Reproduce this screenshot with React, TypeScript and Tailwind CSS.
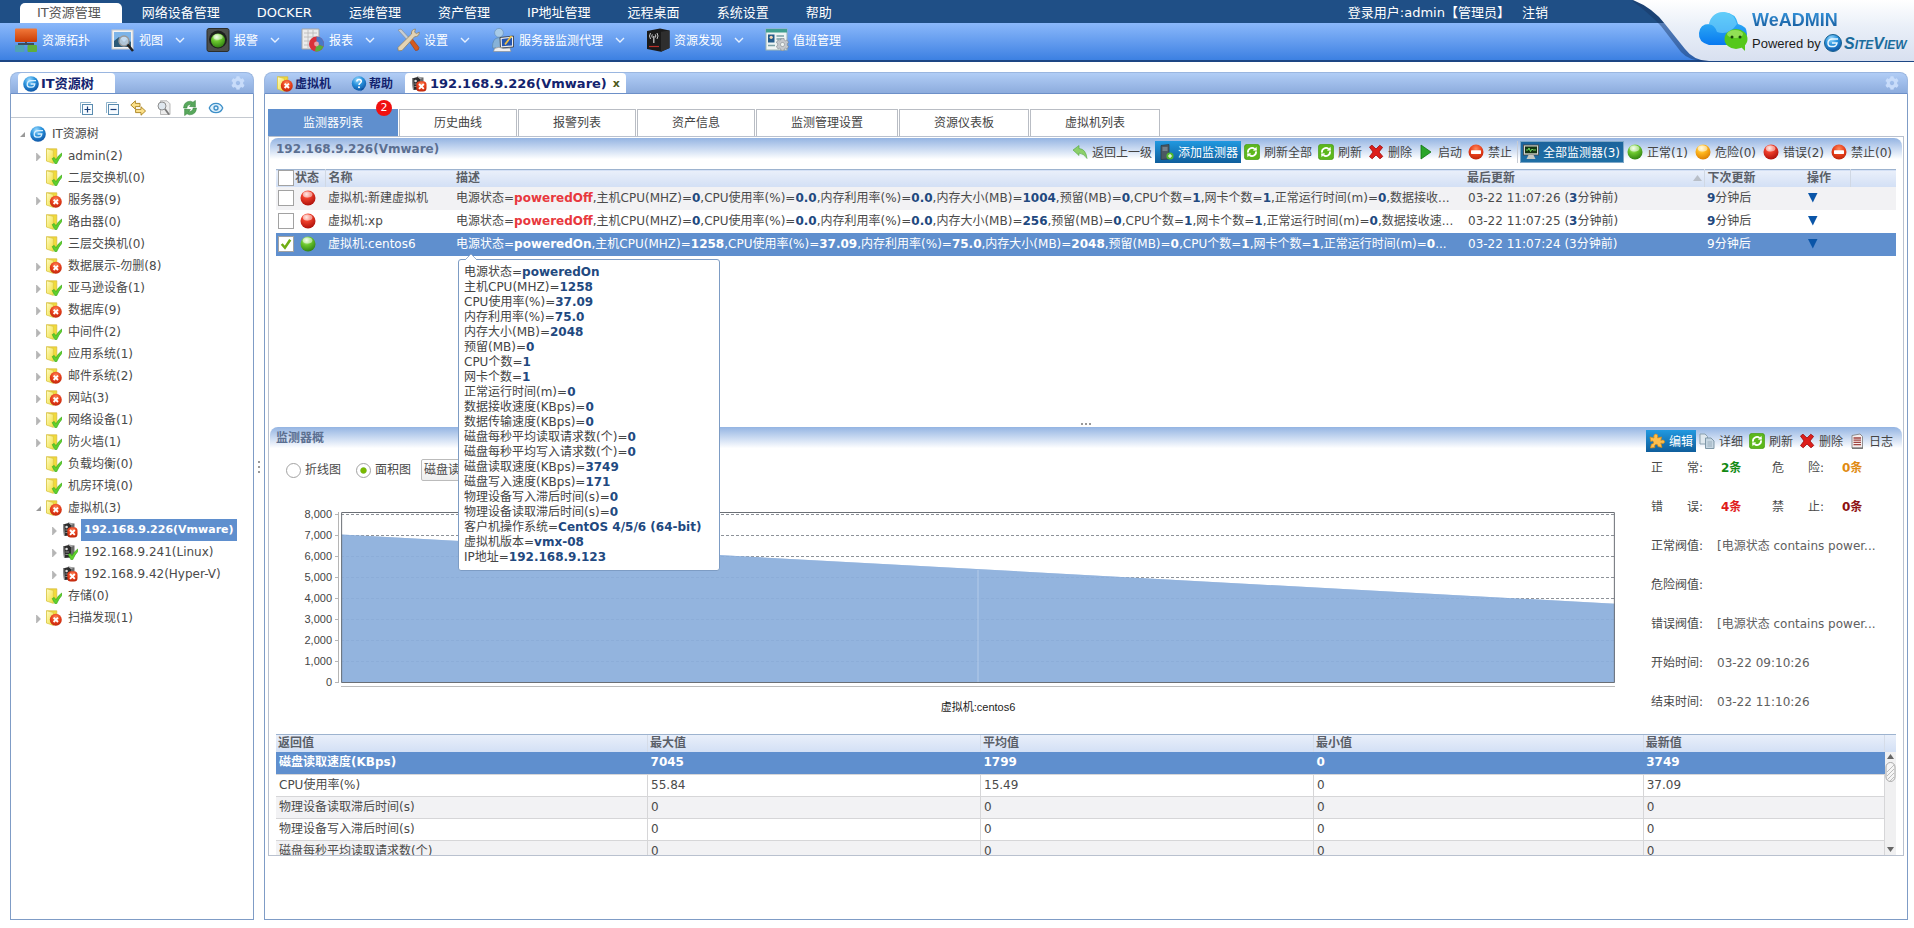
import { useState, type ReactNode } from 'react'
import { FaCog } from 'react-icons/fa'
import { Eye } from 'lucide-react'

type Status = 'ok' | 'error'

interface TreeNode {
    name: string
    status: Status
    level: 1 | 2
    arrow?: 'open' | 'closed'
    selected?: boolean
}

interface Monitor {
    name: string
    status: Status
    updated: string
    values: [string, string][]
    more: string
}

const menus = ['IT资源管理', '网络设备管理', 'DOCKER', '运维管理', '资产管理', 'IP地址管理', '远程桌面', '系统设置', '帮助']

const treeNodes: TreeNode[] = [
    { name: 'admin(2)', status: 'ok', level: 1, arrow: 'closed' },
    { name: '二层交换机(0)', status: 'ok', level: 1 },
    { name: '服务器(9)', status: 'error', level: 1, arrow: 'closed' },
    { name: '路由器(0)', status: 'ok', level: 1 },
    { name: '三层交换机(0)', status: 'ok', level: 1 },
    { name: '数据展示-勿删(8)', status: 'error', level: 1, arrow: 'closed' },
    { name: '亚马逊设备(1)', status: 'ok', level: 1, arrow: 'closed' },
    { name: '数据库(9)', status: 'error', level: 1, arrow: 'closed' },
    { name: '中间件(2)', status: 'ok', level: 1, arrow: 'closed' },
    { name: '应用系统(1)', status: 'ok', level: 1, arrow: 'closed' },
    { name: '邮件系统(2)', status: 'error', level: 1, arrow: 'closed' },
    { name: '网站(3)', status: 'error', level: 1, arrow: 'closed' },
    { name: '网络设备(1)', status: 'ok', level: 1, arrow: 'closed' },
    { name: '防火墙(1)', status: 'ok', level: 1, arrow: 'closed' },
    { name: '负载均衡(0)', status: 'ok', level: 1 },
    { name: '机房环境(0)', status: 'ok', level: 1 },
    { name: '虚拟机(3)', status: 'error', level: 1, arrow: 'open' },
    { name: '192.168.9.226(Vmware)', status: 'error', level: 2, arrow: 'closed', selected: true },
    { name: '192.168.9.241(Linux)', status: 'ok', level: 2, arrow: 'closed' },
    { name: '192.168.9.42(Hyper-V)', status: 'error', level: 2, arrow: 'closed' },
    { name: '存储(0)', status: 'ok', level: 1 },
    { name: '扫描发现(1)', status: 'error', level: 1, arrow: 'closed' },
]

const pageTabs = ['监测器列表', '历史曲线', '报警列表', '资产信息', '监测管理设置', '资源仪表板', '虚拟机列表']

// the list shows the first nine values, the tooltip shows all of them
const LIST_VALUES = 9

const offValues = (memory: string): [string, string][] => [
    ['电源状态', 'poweredOff'],
    ['主机CPU(MHZ)', '0'],
    ['CPU使用率(%)', '0.0'],
    ['内存利用率(%)', '0.0'],
    ['内存大小(MB)', memory],
    ['预留(MB)', '0'],
    ['CPU个数', '1'],
    ['网卡个数', '1'],
    ['正常运行时间(m)', '0'],
]

const monitors: Monitor[] = [
    { name: '虚拟机:新建虚拟机', status: 'error', updated: '03-22 11:07:26', values: offValues('1004'), more: ',数据接收...' },
    { name: '虚拟机:xp', status: 'error', updated: '03-22 11:07:25', values: offValues('256'), more: ',数据接收速...' },
    {
        name: '虚拟机:centos6',
        status: 'ok',
        updated: '03-22 11:07:24',
        more: '...',
        values: [
            ['电源状态', 'poweredOn'],
            ['主机CPU(MHZ)', '1258'],
            ['CPU使用率(%)', '37.09'],
            ['内存利用率(%)', '75.0'],
            ['内存大小(MB)', '2048'],
            ['预留(MB)', '0'],
            ['CPU个数', '1'],
            ['网卡个数', '1'],
            ['正常运行时间(m)', '0'],
            ['数据接收速度(KBps)', '0'],
            ['数据传输速度(KBps)', '0'],
            ['磁盘每秒平均读取请求数(个)', '0'],
            ['磁盘每秒平均写入请求数(个)', '0'],
            ['磁盘读取速度(KBps)', '3749'],
            ['磁盘写入速度(KBps)', '171'],
            ['物理设备写入滞后时间(s)', '0'],
            ['物理设备读取滞后时间(s)', '0'],
            ['客户机操作系统', 'CentOS 4/5/6 (64-bit)'],
            ['虚拟机版本', 'vmx-08'],
            ['IP地址', '192.168.9.123'],
        ],
    },
]

const summaryRows = [
    ['磁盘读取速度(KBps)', '7045', '1799', '0', '3749'],
    ['CPU使用率(%)', '55.84', '15.49', '0', '37.09'],
    ['物理设备读取滞后时间(s)', '0', '0', '0', '0'],
    ['物理设备写入滞后时间(s)', '0', '0', '0', '0'],
    ['磁盘每秒平均读取请求数(个)', '0', '0', '0', '0'],
]

const yLabels = ['8,000', '7,000', '6,000', '5,000', '4,000', '3,000', '2,000', '1,000', '0']

/* ---------- icons ---------- */

function IconDefs() {
    return (
        <svg width="0" height="0" className="absolute" aria-hidden="true">
            <defs>
                <radialGradient id="ballRed" cx="0.4" cy="0.25" r="0.8">
                    <stop offset="0" stopColor="#ffd0c8" />
                    <stop offset="0.35" stopColor="#f0402c" />
                    <stop offset="1" stopColor="#a80d08" />
                </radialGradient>
                <radialGradient id="ballGreen" cx="0.4" cy="0.25" r="0.8">
                    <stop offset="0" stopColor="#e8ffd8" />
                    <stop offset="0.4" stopColor="#6cc82e" />
                    <stop offset="1" stopColor="#2c7d10" />
                </radialGradient>
                <radialGradient id="ballOrange" cx="0.4" cy="0.25" r="0.8">
                    <stop offset="0" stopColor="#fff6c0" />
                    <stop offset="0.4" stopColor="#ffb81e" />
                    <stop offset="1" stopColor="#d97a00" />
                </radialGradient>
                <radialGradient id="ballBlue" cx="0.4" cy="0.25" r="0.8">
                    <stop offset="0" stopColor="#9fdcff" />
                    <stop offset="0.45" stopColor="#2a93dd" />
                    <stop offset="1" stopColor="#0b4fa0" />
                </radialGradient>
                <radialGradient id="crossRed" cx="0.5" cy="0.3" r="0.75">
                    <stop offset="0" stopColor="#ff8a5c" />
                    <stop offset="0.5" stopColor="#e8401c" />
                    <stop offset="1" stopColor="#b82208" />
                </radialGradient>
                <linearGradient id="folder" x1="0" y1="0" x2="1" y2="1">
                    <stop offset="0" stopColor="#fffcc8" />
                    <stop offset="1" stopColor="#f0de3a" />
                </linearGradient>
                <linearGradient id="cloud" x1="0" y1="0" x2="0" y2="1">
                    <stop offset="0" stopColor="#3fc0f7" />
                    <stop offset="1" stopColor="#0879f0" />
                </linearGradient>
                <linearGradient id="logoBack" x1="0" y1="0" x2="0" y2="1">
                    <stop offset="0" stopColor="#ffffff" />
                    <stop offset="0.45" stopColor="#e9eff8" />
                    <stop offset="1" stopColor="#d8e0f0" />
                </linearGradient>
                <linearGradient id="orangeBox" x1="0" y1="0" x2="0" y2="1">
                    <stop offset="0" stopColor="#f2793a" />
                    <stop offset="1" stopColor="#c93c06" />
                </linearGradient>
            </defs>
        </svg>
    )
}

function Svg({ size = 16, children }: { size?: number; children: ReactNode }) {
    return (
        <svg width={size} height={size} viewBox={`0 0 ${size} ${size}`} className="shrink-0" aria-hidden="true">
            {children}
        </svg>
    )
}

const CheckMark = () => <path d="M6.2 10.6 L8.2 9.4 L10 11.8 Q12 7.5 15.8 5 L16 7.2 Q12.6 11 10.6 15.8 H9Z" fill="#5fd02c" stroke="#35a515" strokeWidth="0.6" />

const CrossBall = () => (
    <>
        <circle cx="9.8" cy="9.8" r="6" fill="url(#crossRed)" />
        <path d="M7.6 7.6 L12 12 M12 7.6 L7.6 12" stroke="#fff" strokeWidth="1.9" />
    </>
)

function FolderIcon({ status }: { status: Status }) {
    return (
        <Svg>
            <path d="M0.5 0.8 H10.8 V12.8 H0.5Z" fill="#f1da3a" stroke="#d6b83a" strokeWidth="0.7" />
            <path d="M0.5 0.8 L7.4 2.4 V15.4 L0.5 13Z" fill="url(#folder)" stroke="#d8c646" strokeWidth="0.7" />
            {status === 'ok' ? <CheckMark /> : <CrossBall />}
        </Svg>
    )
}

function HostIcon({ status }: { status: Status }) {
    return (
        <Svg>
            <path d="M6 0.5 L12.5 1.5 V12 L8 14 L6 12Z" fill="#6a6a6a" />
            <path d="M1 2.5 L6.5 1 L9 3 V13.5 L2 14Z" fill="#2c2c2c" />
            <path d="M6.5 1 L12.5 1.5 L9 3Z" fill="#b5b5b5" />
            <path d="M1 2.5 L2.2 2.2 L3 14 H2Z" fill="#8f8f8f" />
            <circle cx="4.6" cy="5" r="1.3" fill="#ddd" />
            <path d="M3.4 8 H7 M3.4 10.5 H7" stroke="#aaa" strokeWidth="0.8" />
            {status === 'ok' ? (
                <CheckMark />
            ) : (
                <>
                    <rect x="5.3" y="5.3" width="10.2" height="10.2" rx="3.5" fill="url(#crossRed)" />
                    <path d="M8 8 L12.8 12.8 M12.8 8 L8 12.8" stroke="#fff" strokeWidth="1.9" />
                </>
            )}
        </Svg>
    )
}

const GlobeIcon = () => (
    <Svg>
        <circle cx="8" cy="8" r="7.8" fill="url(#ballBlue)" />
        <path d="M13 4.6 H8 Q4.6 4.8 4.2 8 Q4 11 6.6 11.2 H9 Q11.4 11 11.8 8 H7.6" fill="none" stroke="#d8f0ff" strokeWidth="1.3" />
    </Svg>
)

const HelpIcon = () => (
    <Svg>
        <circle cx="8" cy="7.5" r="7.2" fill="url(#ballBlue)" />
        <path d="M5.8 5.5 Q6 3.3 8.2 3.4 Q10.4 3.6 10.3 5.5 Q10.2 6.6 8.9 7.3 Q8 7.9 8 9" fill="none" stroke="#fff" strokeWidth="1.5" />
        <circle cx="8" cy="11.2" r="1" fill="#fff" />
        <path d="M9 15.5 L13 13 L11 12Z" fill="#0b4fa0" />
    </Svg>
)

const Ball = ({ fill }: { fill: string }) => (
    <Svg>
        <circle cx="8" cy="8" r="7.5" fill={fill} />
        <ellipse cx="7.6" cy="4.6" rx="4.8" ry="3" fill="#fff" opacity="0.5" />
    </Svg>
)

const StopIcon = () => (
    <Svg>
        <circle cx="8" cy="8" r="7.5" fill="url(#crossRed)" />
        <rect x="3" y="6.3" width="10" height="3.6" rx="0.6" fill="#fff" />
    </Svg>
)

const RefreshIcon = () => (
    <Svg>
        <rect x="0.3" y="0.3" width="15.4" height="15.4" rx="3" fill="#5cb71c" stroke="#3f9410" strokeWidth="0.6" />
        <path d="M4 8.6 A4 4 0 0 1 10.6 5 M12 7.4 A4 4 0 0 1 5.4 11" fill="none" stroke="#fff" strokeWidth="1.8" />
        <path d="M9 6.8 L13 6.6 L12.4 2.8Z M7 9.2 L3 9.4 L3.6 13.2Z" fill="#fff" />
    </Svg>
)

const DeleteIcon = () => (
    <Svg>
        <path d="M1.5 3 L4 1.2 L8 5 L11.8 1.2 L14.6 3.4 L11 8 L14.8 12.4 L12 14.8 L8 11 L4.2 14.8 L1.5 12.6 L5 8Z" fill="#dd1f1c" stroke="#9d0a0a" strokeWidth="0.8" />
    </Svg>
)

const BackIcon = () => (
    <Svg>
        <path d="M1 6 L7 1.5 V4.5 Q14 5 15 14.5 Q12 9.5 7 9 V11.5Z" fill="#8ccf6a" stroke="#4fa53a" strokeWidth="0.6" />
    </Svg>
)

const PlayIcon = () => (
    <Svg>
        <path d="M3 1 L13 8 L3 15Z" fill="#2aa52a" stroke="#107510" strokeWidth="0.8" />
    </Svg>
)

const AddHostIcon = () => (
    <Svg>
        <path d="M3 1.5 L11 0.5 V15 L3 15.5Z" fill="#4b5862" stroke="#2d3942" strokeWidth="0.7" />
        <path d="M4.5 4 H9.5 M4.5 6 H9.5" stroke="#a5b2bb" strokeWidth="0.9" />
        <circle cx="12" cy="12" r="3.6" fill="#52b82c" />
        <path d="M12 10 V14 M10 12 H14" stroke="#fff" strokeWidth="1.1" />
    </Svg>
)

const MonitorIcon = () => (
    <Svg>
        <rect x="0.5" y="1" width="15" height="10" fill="#d4d7d0" stroke="#444" strokeWidth="0.8" />
        <rect x="2" y="2.5" width="12" height="6.8" fill="#123312" />
        <path d="M3 6 H5 L6 4 L7.5 7.5 L9 5 L10 6 H13" fill="none" stroke="#7fe66a" strokeWidth="0.9" />
        <path d="M5.5 11 H10.5 L12.5 15 H3.5Z" fill="#c3c6c0" />
    </Svg>
)

const PuzzleIcon = () => (
    <Svg>
        <path d="M1 4 L5 5 Q4 1.5 6.8 1 Q9.5 1 8.6 5 L12.5 4 L11.8 7.4 Q15.8 6.4 15.6 9 Q15 11.5 11.8 10 L13 14.5 L9 13.6 Q9 11 7 11.2 Q5 11.8 5.8 14.6 L1.4 15 L2.4 11 Q5 11 4.6 9 Q4 7.4 1.8 8.4Z" fill="#ffbf4d" stroke="#d98a14" strokeWidth="0.7" />
    </Svg>
)

const CopyIcon = () => (
    <Svg>
        <path d="M1 1 H6 L8.5 3.5 V11 H1Z" fill="#dfe8ee" stroke="#8ba0ae" />
        <path d="M6.5 5 H12 L15 8 V15.5 H6.5Z" fill="#c6d6e2" stroke="#7f97a7" />
        <path d="M8.5 9 H13 M8.5 11 H13 M8.5 13 H13" stroke="#8fa5b4" strokeWidth="0.8" />
    </Svg>
)

const LogIcon = () => (
    <Svg>
        <path d="M3 2.5 L11 1 L13.5 3.5 V15 H3Z" fill="#f4eeee" stroke="#777" strokeWidth="0.8" />
        <path d="M4.5 5 H12 M4.5 7.2 H12 M4.5 9.4 H12 M4.5 11.6 H12" stroke="#a04440" strokeWidth="1.3" />
        <path d="M3 15.2 H14" stroke="#555" />
    </Svg>
)

/* top tool bar, 24px */

const TopologyIcon = () => (
    <Svg size={24}>
        <path d="M12 13 V17 M5 19 V16 H19 V19" fill="none" stroke="#3f4d5c" strokeWidth="2" />
        <rect x="1" y="0.5" width="22" height="13.5" rx="1" fill="url(#orangeBox)" />
        <rect x="1" y="17" width="9.5" height="7" rx="1" fill="#4fa3b5" />
        <rect x="13.5" y="17" width="9.5" height="7" rx="1" fill="#5fae3c" />
    </Svg>
)

const ViewIcon = () => (
    <Svg size={24}>
        <rect x="1" y="2" width="21" height="19" fill="#f3f3f3" stroke="#c9c9c9" />
        <rect x="3" y="4" width="17" height="15" fill="#7db4e8" />
        <path d="M3 19 V13 L8 9 L13 14 L16 11 L20 14 V19Z" fill="#2d5a78" />
        <circle cx="13" cy="13" r="5" fill="#dce9f5" fillOpacity="0.75" stroke="#999" strokeWidth="1.4" />
        <path d="M16.5 16.5 L22 23" stroke="#222" strokeWidth="2.6" />
    </Svg>
)

const AlarmIcon = () => (
    <Svg size={24}>
        <rect x="1" y="0.5" width="22" height="23" rx="2" fill="#4c4f4c" stroke="#2b2d2b" />
        <circle cx="12" cy="11.5" r="9" fill="#1d201d" />
        <circle cx="12" cy="12.5" r="7" fill="url(#ballGreen)" />
        <ellipse cx="12" cy="9" rx="4.6" ry="2.8" fill="#fff" opacity="0.45" />
    </Svg>
)

const ReportIcon = () => (
    <Svg size={24}>
        <path d="M1 1 H18 V21 H1Z" fill="#ececec" stroke="#a5a5a5" />
        <path d="M3 5 H16 M3 9 H16 M3 13 H16 M3 17 H16 M7 2 V20 M12 2 V20" stroke="#b8b8b8" strokeWidth="0.8" />
        <circle cx="15.5" cy="16" r="7.5" fill="#d9303a" />
        <path d="M15.5 16 V8.5 A7.5 7.5 0 0 1 22.5 18.5Z" fill="#4a78c8" />
        <path d="M15.5 16 L22.5 18.5 A7.5 7.5 0 0 1 14 23.3Z" fill="#58ad3e" />
        <circle cx="15.5" cy="16" r="2.4" fill="#e9a0a6" />
    </Svg>
)

const ToolsIcon = () => (
    <Svg size={24}>
        <path d="M2 2 L5 1 L15 12 L13 14Z" fill="#c9ced3" stroke="#808890" strokeWidth="0.6" />
        <path d="M13 13 L16 10.5 L23 19.5 Q23 23 19.5 22.5Z" fill="#d55a1c" stroke="#9c3a0c" strokeWidth="0.6" />
        <path d="M15.5 6 Q15 1.5 19.5 1 L18.6 4.2 L20.5 5.6 L23.3 4 Q23.5 8.6 18.5 8.8 L6 22.5 L2.3 22.8 L1.8 19.6Z" fill="#e2d3b4" stroke="#8f7c58" strokeWidth="0.7" />
    </Svg>
)

const AgentIcon = () => (
    <Svg size={24}>
        <circle cx="8" cy="4.8" r="4.4" fill="#a8cbe8" stroke="#6c94b8" strokeWidth="0.7" />
        <path d="M1.5 20 Q1 10 8 9.6 Q13 10 13 18 V20Z" fill="#87b2d8" stroke="#5a86ad" strokeWidth="0.7" />
        <path d="M9 9.5 L22.5 8 V19 L9.5 20Z" fill="#e8ecf0" stroke="#333" strokeWidth="0.8" />
        <path d="M10.8 11 L21 9.8 V17.4 L11 18.2Z" fill="#2455b0" />
        <path d="M20.5 8 L14 16.5" stroke="#efc045" strokeWidth="1.8" />
        <path d="M3.5 20.5 Q8 18 12 20.5 L19 20 L20 23.5 H2.5Z" fill="#efefef" stroke="#888" strokeWidth="0.6" />
    </Svg>
)

const DiscoveryIcon = () => (
    <Svg size={24}>
        <path d="M1 3 L14 0.5 L23.5 2.5 V20 L15 23.8 L1 21Z" fill="#1a1a1a" />
        <path d="M15 3.8 L23.5 2.5 V20 L15 23.8Z" fill="#2e2e2e" />
        <path d="M4.5 11 Q2.5 8 4.5 5 M11 11 Q13 8 11 5 M6.3 9.6 Q5.3 8 6.3 6.4 M9.3 9.6 Q10.3 8 9.3 6.4" fill="none" stroke="#c8c8c8" strokeWidth="1" />
        <path d="M7.8 8 V15" stroke="#c8c8c8" strokeWidth="1.3" />
        <path d="M3 18.5 H13" stroke="#b83028" strokeWidth="1.2" />
    </Svg>
)

const DutyIcon = () => (
    <Svg size={24}>
        <rect x="1" y="1" width="21" height="21" fill="#eef4f3" stroke="#9ab3b5" />
        <rect x="1" y="1" width="21" height="3.5" fill="#3f9f90" />
        <rect x="3" y="6.5" width="6.5" height="8" fill="#235b8a" />
        <circle cx="6.2" cy="9.3" r="1.6" fill="#f3d4b0" />
        <path d="M11.5 8 H19 M11.5 11 H19 M3 17.5 H10" stroke="#7aa0a5" strokeWidth="1.4" />
        <FaCog x="11" y="10" size={13} color="#c3c7cc" stroke="#70767c" strokeWidth="20" />
    </Svg>
)

const toolbar = [
    { label: '资源拓扑', icon: <TopologyIcon />, menu: false },
    { label: '视图', icon: <ViewIcon />, menu: true },
    { label: '报警', icon: <AlarmIcon />, menu: true },
    { label: '报表', icon: <ReportIcon />, menu: true },
    { label: '设置', icon: <ToolsIcon />, menu: true },
    { label: '服务器监测代理', icon: <AgentIcon />, menu: true },
    { label: '资源发现', icon: <DiscoveryIcon />, menu: true },
    { label: '值班管理', icon: <DutyIcon />, menu: false },
]

const treeTools = [
    {
        label: '展开',
        icon: (
            <Svg>
                <path d="M2.5 13 V2.5 H13" fill="none" stroke="#8fb4cc" />
                <rect x="4.5" y="4.5" width="10" height="10" fill="#f7fbff" stroke="#5a8cb0" />
                <path d="M6.5 9.5 H12.5 M9.5 6.5 V12.5" stroke="#1a3f7a" strokeWidth="1.2" />
            </Svg>
        ),
    },
    {
        label: '折叠',
        icon: (
            <Svg>
                <path d="M2.5 13 V2.5 H13" fill="none" stroke="#8fb4cc" />
                <rect x="4.5" y="4.5" width="10" height="10" fill="#f7fbff" stroke="#5a8cb0" />
                <path d="M6.5 9.5 H12.5" stroke="#1a3f7a" strokeWidth="1.2" />
            </Svg>
        ),
    },
    {
        label: '切换',
        icon: (
            <Svg>
                <path d="M0.8 5 L5.4 0.8 V3.4 H10 V6.6 H5.4 V9.2Z" fill="#fbe089" stroke="#a8801c" strokeWidth="0.9" />
                <path d="M15.6 11 L11 6.8 V9.4 H5.6 V12.6 H11 V15.2Z" fill="#fbe089" stroke="#a8801c" strokeWidth="0.9" />
            </Svg>
        ),
    },
    {
        label: '查找',
        icon: (
            <Svg>
                <path d="M4.5 0.8 H11 L14 3.8 V14.5 H4.5Z" fill="#ececec" stroke="#a8a8a8" strokeWidth="0.8" />
                <circle cx="6" cy="6" r="4" fill="#dfe7ee" stroke="#8d8d8d" strokeWidth="1" />
                <path d="M9 9 L13 14.5" stroke="#7a7a7a" strokeWidth="1.8" />
            </Svg>
        ),
    },
    {
        label: '刷新',
        icon: (
            <Svg>
                <path d="M1.5 8 Q2 1.2 8.5 1.2 L11 2.2 L13.4 0.4 V7 L7.4 6.4 L9.2 4.6 Q5.6 4 4.8 8Z" fill="#58a85c" stroke="#2c7a34" strokeWidth="0.5" />
                <path d="M14.5 8 Q14 14.8 7.5 14.8 L5 13.8 L2.6 15.6 V9 L8.6 9.6 L6.8 11.4 Q10.4 12 11.2 8Z" fill="#58a85c" stroke="#2c7a34" strokeWidth="0.5" />
            </Svg>
        ),
    },
    { label: '显示', icon: <Eye className="size-4 text-[#3d8fc8]" fill="#dff0fb" /> },
]

/* ---------- pieces ---------- */

interface ActionButtonProps {
    icon: ReactNode
    label: string
    variant?: 'plain' | 'count' | 'primary' | 'pressed'
}

function ActionButton({ icon, label, variant = 'plain' }: ActionButtonProps) {
    const styles = {
        plain: 'text-[#444]',
        count: 'min-w-[68px] text-[#444]',
        primary: 'bg-linear-to-b from-[#2199e0] to-[#0f5e9c] text-white',
        pressed: 'min-w-[104px] bg-linear-to-b from-[#1c639c] to-[#1f6fa5] text-white ring-1 ring-inset ring-[#7fa8c8]',
    }
    return (
        <button type="button" className={`flex h-[22px] items-center gap-1 px-[3px] whitespace-nowrap ${styles[variant]}`}>
            {icon}
            <span className="pt-[2px]">{label}</span>
        </button>
    )
}

function SectionHeader({ title, children }: { title: string; children: ReactNode }) {
    return (
        <div className="flex h-[25px] justify-between rounded-t-lg bg-linear-to-b from-[#94b4e2] to-white to-85% pl-[6px] pr-[6px]">
            <h2 className="font-bold leading-[22px] whitespace-nowrap text-[#5b6f91]">{title}</h2>
            <div className="flex items-end">{children}</div>
        </div>
    )
}

function TreeArrow({ state }: { state?: 'open' | 'closed' }) {
    return (
        <svg width="10" height="16" viewBox="0 0 10 16" className="shrink-0" aria-hidden="true">
            {state === 'closed' && <path d="M0.5 5 L4.5 9 L0.5 13Z" fill="#b5b5b5" stroke="#a5a5a5" strokeWidth="0.5" />}
            {state === 'open' && <path d="M5 6 V11 H0Z" fill="#999" />}
        </svg>
    )
}

function Description({ monitor, selected }: { monitor: Monitor; selected: boolean }) {
    return (
        <div className="truncate">
            {monitor.values.slice(0, LIST_VALUES).map(([key, value], i) => {
                const color = selected ? 'text-white' : value === 'poweredOff' ? 'text-[#e8383d]' : 'text-[#22497f]'
                return (
                    <span key={key}>
                        {i > 0 && ','}
                        {key}=<b className={color}>{value}</b>
                    </span>
                )
            })}
            {monitor.more}
        </div>
    )
}

function Tooltip({ values }: { values: [string, string][] }) {
    return (
        <div role="tooltip" className="absolute top-full left-[5px] z-10 mt-[3px] w-[262px] rounded-[3px] border border-[#7d9cc4] bg-white px-[5px] py-[5px] leading-[15px] whitespace-nowrap text-[#444]">
            <svg width="14" height="8" viewBox="0 0 14 8" className="absolute -top-[7px] left-[5px]" aria-hidden="true">
                <path d="M1 7 L7 1 L13 7 V8 H1Z" fill="#fff" />
                <path d="M1 7 L7 1 L13 7" fill="none" stroke="#7d9cc4" strokeWidth="0.8" />
            </svg>
            {values.map(([key, value]) => (
                <div key={key}>
                    {key}=<b className="text-[#22497f]">{value}</b>
                </div>
            ))}
        </div>
    )
}

function CheckBox({ label, checked, onChange }: { label: string; checked: boolean; onChange: () => void }) {
    return (
        <span className="relative ml-[2px] block size-4">
            <input type="checkbox" aria-label={label} checked={checked} onChange={onChange} className="block size-4 appearance-none border border-[#a2a2a2] bg-white" />
            {checked && (
                <svg viewBox="0 0 15 15" className="pointer-events-none absolute inset-0" aria-hidden="true">
                    <path d="M3.5 7.5 L6.5 11 L11.5 3.5" fill="none" stroke="#6fae14" strokeWidth="2.4" />
                </svg>
            )}
        </span>
    )
}

function TopBar() {
    return (
        <header className="relative shrink-0">
            <nav className="flex h-[23px] items-end gap-[3px] bg-[#1f4f86] pl-5 text-[13px] leading-5">
                {menus.map((menu, i) => (
                    <a key={menu} href="#" className={`rounded-t-[5px] pl-[17px] whitespace-nowrap ${i === 0 ? 'bg-white pr-[21px] text-[#555]' : 'pr-[17px] text-white'}`}>
                        {menu}
                    </a>
                ))}
                <div className="mr-[366px] ml-auto flex gap-3 whitespace-nowrap text-white">
                    <span>登录用户:admin【管理员】</span>
                    <a href="#">注销</a>
                </div>
            </nav>
            <div className="flex h-[39px] gap-[21px] border-b-2 border-[#1d4684] bg-linear-to-b from-[#8ab8fa] to-[#3c80e2] pl-[14px]">
                {toolbar.map((item) => (
                    <button key={item.label} type="button" className="flex h-[34px] items-center gap-1 whitespace-nowrap text-white">
                        {item.icon}
                        <span className="pt-[2px]">{item.label}</span>
                        {item.menu && (
                            <svg width="10" height="8" viewBox="0 0 10 8" className="ml-2" aria-hidden="true">
                                <path d="M1 2 L5 6 L9 2" fill="none" stroke="#e6f0ff" strokeWidth="1.4" />
                            </svg>
                        )}
                    </button>
                ))}
            </div>
            <div className="absolute top-0 right-0 h-[61px] w-[281px]">
                <svg width="281" height="61" viewBox="0 0 281 61" className="absolute inset-0" aria-hidden="true">
                    <path d="M-2 0 Q15 12 28 26 L48 52 Q56 61 72 61 H90 V0Z" fill="#16345f" opacity="0.45" />
                    <path d="M0 0 Q20 8 32 24 L52 49 Q61 61 76 61 H281 V0Z" fill="url(#logoBack)" />
                    <path d="M76 45 Q65 42 66 33 Q67 24 76 24 Q79 12 91 12 Q103 13 105 24 Q114 26 114 34 Q113 45 102 45Z" fill="url(#cloud)" />
                    <path d="M70 27 Q80 20 84 32 Q96 36 104 24 Q101 13 91 12 Q79 12 76 24Z" fill="#7fd8fc" opacity="0.55" />
                    <ellipse cx="103" cy="39" rx="11.5" ry="10" fill="#55c81c" />
                    <path d="M107 46 L112 51 L112 43Z" fill="#55c81c" />
                    <ellipse cx="102" cy="34" rx="8" ry="4" fill="#b9f07c" opacity="0.6" />
                    <circle cx="99" cy="37" r="1.5" fill="#1b4a0c" />
                    <circle cx="107" cy="37" r="1.5" fill="#1b4a0c" />
                    <circle cx="200" cy="43" r="8.5" fill="url(#ballBlue)" stroke="#1a6290" />
                    <path d="M205 39 H199 Q195 39.5 195 43 Q195 46.5 198 46.5 H201 Q203.5 46 204 43 H199" fill="none" stroke="#eaf7ff" strokeWidth="1.5" />
                </svg>
                <div className="relative pt-2 pl-[119px] font-['Liberation_Sans',sans-serif] whitespace-nowrap">
                    <div className="bg-linear-to-b from-[#3da0ea] to-[#0e4f8e] bg-clip-text text-[18px] leading-6 font-bold text-transparent">WeADMIN</div>
                    <div className="flex items-center leading-5">
                        <span className="w-[92px] text-[13px] text-[#1c1c1c]">Powered by</span>
                        <span className="text-[12px] font-bold text-[#1b6c9c] italic">
                            <b className="text-base">S</b>ITE<b className="text-base">V</b>IEW
                        </span>
                    </div>
                </div>
            </div>
        </header>
    )
}

function ResourceTree() {
    return (
        <aside className="flex w-[244px] shrink-0 flex-col">
            <div className="flex h-[22px] items-end justify-between rounded-t-lg border border-b-[#6d90c8] border-[#9ab6e0] bg-linear-to-b from-[#b1cdf6] to-[#8dacdd] pr-2 pl-[7px]">
                <h1 className="flex h-5 items-center gap-[2px] rounded-t-[4px] bg-white pt-[2px] pr-[21px] pl-[5px] text-[13px] font-bold text-[#13236e]">
                    <GlobeIcon />
                    IT资源树
                </h1>
                <button type="button" aria-label="设置" className="mb-[3px] text-[#c8dcfa]">
                    <FaCog size={14} />
                </button>
            </div>
            <div className="flex min-h-0 flex-1 flex-col border border-t-0 border-[#7f9cc6]">
                <div className="flex h-6 items-center gap-[10px] border-b border-[#c4c9d0] pt-1 pl-[67px]">
                    {treeTools.map((tool) => (
                        <button key={tool.label} type="button" aria-label={tool.label}>
                            {tool.icon}
                        </button>
                    ))}
                </div>
                <ul className="pt-[5px]">
                    <li className="flex h-[22px] items-center pl-[9px]">
                        <TreeArrow state="open" />
                        <GlobeIcon />
                        <span className="ml-[3px] px-[3px]">IT资源树</span>
                    </li>
                    {treeNodes.map((node) => (
                        <li key={node.name} className={`flex h-[22px] items-center whitespace-nowrap ${node.level === 1 ? 'pl-[25px]' : 'pl-[41px]'}`}>
                            <TreeArrow state={node.arrow} />
                            {node.level === 1 ? <FolderIcon status={node.status} /> : <HostIcon status={node.status} />}
                            <span className={`ml-[3px] px-[3px] leading-[22px] ${node.selected ? 'bg-[#5f8fce] text-[11px] font-bold text-white' : ''}`}>
                                {node.name}
                            </span>
                        </li>
                    ))}
                </ul>
            </div>
        </aside>
    )
}

function MonitorTable() {
    const [checked, setChecked] = useState('虚拟机:centos6')

    return (
        <table className="w-full table-fixed text-left whitespace-nowrap">
            <colgroup>
                <col className="w-[18px]" />
                <col className="w-[31px]" />
                <col className="w-[128px]" />
                <col />
                <col className="w-[241px]" />
                <col className="w-[99px]" />
                <col className="w-[47px]" />
                <col className="w-[46px]" />
            </colgroup>
            <thead>
                <tr className="h-[17px] border-t border-[#9db3cf] bg-linear-to-b from-[#e9effa] to-[#d3e0f5] leading-4 text-[#5a5f68]">
                    <th className="p-0">
                        <CheckBox label="全选" checked={false} onChange={() => setChecked('')} />
                    </th>
                    <th className="border-r border-[#d0d8e4] p-0 pl-[1px]">状态</th>
                    <th className="p-0 pl-[3px]">名称</th>
                    <th className="p-0 pl-[3px]">描述</th>
                    <th className="border-r border-[#d0d8e4] p-0 pl-1">
                        <span className="flex items-center justify-between">
                            最后更新
                            <svg width="9" height="6" viewBox="0 0 9 6" aria-hidden="true" className="mr-[2px]">
                                <path d="M4.5 0 L9 6 H0Z" fill="#b9bfc8" />
                            </svg>
                        </span>
                    </th>
                    <th className="p-0 pl-[3px]">下次更新</th>
                    <th className="border-r border-[#d0d8e4] p-0 pl-1">操作</th>
                    <th className="p-0" />
                </tr>
            </thead>
            <tbody>
                {monitors.map((monitor, i) => {
                    const selected = i === 2
                    return (
                        <tr key={monitor.name} className={`h-[23px] leading-[23px] ${selected ? 'bg-[#5f8fce] text-white' : i === 0 ? 'bg-[#f2f2f4]' : ''}`}>
                            <td className="p-0">
                                <CheckBox
                                    label={monitor.name}
                                    checked={checked === monitor.name}
                                    onChange={() => setChecked(checked === monitor.name ? '' : monitor.name)}
                                />
                            </td>
                            <td className="p-0 pl-[6px]">
                                <Ball fill={monitor.status === 'ok' ? 'url(#ballGreen)' : 'url(#ballRed)'} />
                            </td>
                            <td className="truncate p-0 pl-[3px]">{monitor.name}</td>
                            <td className="relative p-0 pl-[3px]">
                                <Description monitor={monitor} selected={selected} />
                                {selected && <Tooltip values={monitor.values} />}
                            </td>
                            <td className="p-0 pl-[5px]">
                                {monitor.updated} (<b className={selected ? 'font-normal' : 'text-[#22497f]'}>3</b>分钟前)
                            </td>
                            <td className="p-0 pl-[3px]">
                                <b className={selected ? 'font-normal' : 'text-[#22497f]'}>9</b>分钟后
                            </td>
                            <td className="p-0 pl-[5px]">
                                <button type="button" aria-label="操作" className="flex">
                                    <svg width="10" height="10" viewBox="0 0 10 10" aria-hidden="true">
                                        <path d="M0 0 H9.5 L4.8 9.5Z" fill="#0a55a8" />
                                    </svg>
                                </button>
                            </td>
                            <td className="p-0" />
                        </tr>
                    )
                })}
            </tbody>
        </table>
    )
}

function AreaChart() {
    return (
        <figure>
            <div className="flex">
                <div className="w-[56px] text-right font-['Liberation_Sans',sans-serif] text-[11px] leading-[21px] text-[#444]">
                    {yLabels.map((label) => (
                        <div key={label}>{label}</div>
                    ))}
                </div>
                <svg width="6" height="189" viewBox="0 0 6 189" className="ml-[3px] shrink-0" aria-hidden="true">
                    <path d="M3.5 8 V179" stroke="#b5b5b5" />
                    {yLabels.map((label, i) => (
                        <path key={label} d={`M0 ${10.5 + i * 21} H4`} stroke="#b5b5b5" />
                    ))}
                </svg>
                <svg height="189" viewBox="0 0 1000 189" preserveAspectRatio="none" className="h-[189px] min-w-0 flex-1" role="img" aria-label="虚拟机:centos6">
                    {yLabels.slice(0, 8).map((label, i) => (
                        <path key={label} d={`M0 ${10.5 + i * 21} H1000`} stroke="#8d9299" strokeDasharray="3 2" vectorEffect="non-scaling-stroke" />
                    ))}
                    <path d="M0 30.5 L1000 99.8 V178.5 H0Z" fill="#8cafdc" fillOpacity="0.85" />
                    <path d="M0 30.5 L1000 99.8 V178.5 H0Z" fill="#8cafdc" fillOpacity="0.6" />
                    <path d="M500 66 V178" stroke="#b4cbe9" vectorEffect="non-scaling-stroke" />
                    <path d="M0.5 8.5 H999.5 V178.5 H0.5Z" fill="none" stroke="#6b6f75" vectorEffect="non-scaling-stroke" />
                    <path d="M0 182.5 H1000" stroke="#bcbcbc" vectorEffect="non-scaling-stroke" />
                </svg>
            </div>
            <figcaption className="pl-[65px] text-center font-['Liberation_Sans','Noto_Sans_CJK_SC',sans-serif] text-[11px] leading-7 text-[#222]">虚拟机:centos6</figcaption>
        </figure>
    )
}

function InfoPanel() {
    const counts = [
        [
            { label: ['正', '常'], value: '2条', color: 'text-[#128a12]' },
            { label: ['危', '险'], value: '0条', color: 'text-[#e08a10]' },
        ],
        [
            { label: ['错', '误'], value: '4条', color: 'text-[#e01a1a]' },
            { label: ['禁', '止'], value: '0条', color: 'text-[#8c1010]' },
        ],
    ]
    const details = [
        ['正常阀值', '[电源状态 contains power...'],
        ['危险阀值', ''],
        ['错误阀值', '[电源状态 contains power...'],
        ['开始时间', '03-22 09:10:26'],
        ['结束时间', '03-22 11:10:26'],
    ]
    return (
        <dl className="flex w-[251px] shrink-0 flex-col gap-[19px] pt-[6px] leading-5 whitespace-nowrap">
            {counts.map((row, i) => (
                <div key={i} className="flex">
                    {row.map((item) => (
                        <div key={item.value + item.label[0]} className="flex w-[121px]">
                            <dt className="flex w-[70px]">
                                <span className="w-9">{item.label[0]}</span>
                                <span>{item.label[1]}:</span>
                            </dt>
                            <dd className={`font-bold ${item.color}`}>{item.value}</dd>
                        </div>
                    ))}
                </div>
            ))}
            {details.map(([label, value]) => (
                <div key={label} className="flex">
                    <dt className="w-[66px]">{label}:</dt>
                    <dd className="text-[#606060]">{value}</dd>
                </div>
            ))}
        </dl>
    )
}

function SummaryTable() {
    const columns = ['返回值', '最大值', '平均值', '最小值', '最新值']
    return (
        <div className="mx-[6px] mt-[13px] flex min-h-0 flex-1 overflow-hidden border-t border-[#9db3cf]">
            <div className="min-w-0 flex-1">
                <table className="w-full table-fixed text-left">
                    <colgroup>
                        <col className="w-[23.1%]" />
                        <col className="w-[20.7%]" />
                        <col className="w-[20.7%]" />
                        <col className="w-[20.5%]" />
                        <col className="w-[15%]" />
                    </colgroup>
                    <thead>
                        <tr className="h-[17px] bg-linear-to-b from-[#e9effa] to-[#d3e0f5] leading-[17px] text-[#5a5f68]">
                            {columns.map((column) => (
                                <th key={column} className="border-r border-[#d5dce8] p-0 pl-[2px]">{column}</th>
                            ))}
                        </tr>
                    </thead>
                    <tbody>
                        {summaryRows.map((row, i) => (
                            <tr
                                key={row[0]}
                                className={`h-[22px] border-b border-[#d6d6d8] leading-[21px] ${i === 0 ? 'bg-[#5f8fce] font-bold text-white' : i % 2 === 0 ? 'bg-[#f2f2f4]' : ''}`}
                            >
                                {row.map((cell, j) => (
                                    <td key={j} className={`truncate p-0 pl-[3px] ${i > 0 ? 'border-r border-[#d6d6d8]' : ''}`}>{cell}</td>
                                ))}
                            </tr>
                        ))}
                    </tbody>
                </table>
            </div>
            <div className="flex w-[11px] shrink-0 flex-col bg-[#f0f0f1]">
                <div className="h-[17px] shrink-0 bg-linear-to-b from-[#e9effa] to-[#d3e0f5]" />
                <svg width="11" height="30" viewBox="0 0 11 30" className="shrink-0" aria-hidden="true">
                    <path d="M5.5 2 L9 7 H2Z" fill="#666" />
                    <rect x="1" y="10.5" width="9" height="19" rx="4.5" fill="#f5f5f5" stroke="#a8a8a8" />
                    <path d="M2 20 L9 13 M2 24 L9 17 M2.5 27.5 L9 21 M5 29 L9 25" stroke="#bdbdbd" />
                </svg>
                <svg width="11" height="9" viewBox="0 0 11 9" className="mt-auto shrink-0" aria-hidden="true">
                    <path d="M5.5 6 L9 1 H2Z" fill="#666" />
                </svg>
            </div>
        </div>
    )
}

function Workspace() {
    const [chartType, setChartType] = useState('area')

    return (
        <main className="flex min-w-0 flex-1 flex-col">
            <div className="flex h-[22px] items-end rounded-t-lg border border-b-[#6d90c8] border-[#9ab6e0] bg-linear-to-b from-[#b1cdf6] to-[#8dacdd] pr-2 pl-3 font-bold whitespace-nowrap text-[#13236e]">
                <a href="#" className="flex h-5 items-center gap-[2px] pt-[2px]">
                    <FolderIcon status="error" />
                    虚拟机
                </a>
                <a href="#" className="ml-5 flex h-5 items-center gap-[2px] pt-[2px]">
                    <HelpIcon />
                    帮助
                </a>
                <div className="ml-3 flex h-5 items-center rounded-t-[4px] bg-white px-[6px] pt-[2px]">
                    <HostIcon status="error" />
                    <a href="#" className="ml-[3px] text-[13px]">192.168.9.226(Vmware)</a>
                    <button type="button" aria-label="关闭" className="ml-[6px] text-[11px] text-[#4d5a1c]">x</button>
                </div>
                <button type="button" aria-label="设置" className="mb-[3px] ml-auto text-[#c8dcfa]">
                    <FaCog size={14} />
                </button>
            </div>
            <div className="flex min-h-0 flex-1 flex-col border border-t-0 border-[#7f9cc6] px-[3px] pt-[15px] pb-[63px]">
                <nav className="flex h-[27px] gap-[1px]">
                    {pageTabs.map((tab, i) => (
                        <a
                            key={tab}
                            href="#"
                            className={`relative px-[34px] leading-[26px] whitespace-nowrap ${i === 0 ? 'border border-[#5f8fce] bg-[#5f8fce] text-white' : 'border border-b-0 border-[#b9bdc4] text-[#444]'}`}
                        >
                            {tab}
                            {i === 0 && (
                                <span className="absolute -top-[10px] right-[5px] flex size-4 items-center justify-center rounded-full bg-[#f01010] text-[11px] leading-4 text-white">2</span>
                            )}
                        </a>
                    ))}
                </nav>
                <div className="flex min-h-0 flex-1 flex-col border border-[#b9c1cf] px-[1px] pt-[1px]">
                    <section className="h-[283px] shrink-0">
                        <SectionHeader title="192.168.9.226(Vmware)">
                            <ActionButton icon={<BackIcon />} label="返回上一级" />
                            <ActionButton icon={<AddHostIcon />} label="添加监测器" variant="primary" />
                            <ActionButton icon={<RefreshIcon />} label="刷新全部" />
                            <ActionButton icon={<RefreshIcon />} label="刷新" />
                            <ActionButton icon={<DeleteIcon />} label="删除" />
                            <ActionButton icon={<PlayIcon />} label="启动" />
                            <ActionButton icon={<StopIcon />} label="禁止" />
                            <span className="mx-[2px] h-[22px] w-[1px] bg-[#c8ccd4]" />
                            <ActionButton icon={<MonitorIcon />} label="全部监测器(3)" variant="pressed" />
                            <ActionButton icon={<Ball fill="url(#ballGreen)" />} label="正常(1)" variant="count" />
                            <ActionButton icon={<Ball fill="url(#ballOrange)" />} label="危险(0)" variant="count" />
                            <ActionButton icon={<Ball fill="url(#ballRed)" />} label="错误(2)" variant="count" />
                            <ActionButton icon={<StopIcon />} label="禁止(0)" variant="count" />
                        </SectionHeader>
                        <div className="mx-[6px] mt-[6px]">
                            <MonitorTable />
                        </div>
                    </section>
                    <div className="flex h-[6px] shrink-0 items-center justify-center gap-[2px]">
                        <i className="size-[2px] bg-[#999]" />
                        <i className="size-[2px] bg-[#999]" />
                        <i className="size-[2px] bg-[#999]" />
                    </div>
                    <section className="flex min-h-0 flex-1 flex-col">
                        <SectionHeader title="监测器概">
                            <ActionButton icon={<PuzzleIcon />} label="编辑" variant="primary" />
                            <ActionButton icon={<CopyIcon />} label="详细" />
                            <ActionButton icon={<RefreshIcon />} label="刷新" />
                            <ActionButton icon={<DeleteIcon />} label="删除" />
                            <ActionButton icon={<LogIcon />} label="日志" />
                        </SectionHeader>
                        <div className="flex shrink-0 gap-9">
                            <div className="min-w-0 flex-1 pt-[7px] pl-[6px]">
                                <div className="mb-[23px] flex h-[22px] items-center gap-[15px] pl-[10px]">
                                    {[['line', '折线图'], ['area', '面积图']].map(([value, label]) => (
                                        <label key={value} className="flex items-center gap-1">
                                            <input
                                                type="radio"
                                                name="chart"
                                                value={value}
                                                checked={chartType === value}
                                                onChange={() => setChartType(value)}
                                                className="size-[15px] appearance-none rounded-full border border-[#a2a2a2] bg-white checked:bg-radial checked:from-[#7ab800] checked:from-30% checked:to-white checked:to-40%"
                                            />
                                            {label}
                                        </label>
                                    ))}
                                    <select aria-label="返回值" className="-ml-[5px] h-[22px] w-[160px] appearance-none rounded-[2px] border border-[#bbb] bg-linear-to-b from-white to-[#eee] px-[2px]">
                                        <option>磁盘读取速度(KBps)</option>
                                    </select>
                                </div>
                                <AreaChart />
                            </div>
                            <InfoPanel />
                        </div>
                        <SummaryTable />
                    </section>
                </div>
            </div>
        </main>
    )
}

export default function App() {
    return (
        <div className="flex h-screen min-h-[760px] flex-col overflow-hidden bg-white font-['DejaVu_Sans','Noto_Sans_CJK_SC',sans-serif] text-[12px] text-[#4a4a4a]">
            <IconDefs />
            <TopBar />
            <div className="flex min-h-0 flex-1 pt-[10px] pr-[6px] pb-2 pl-[10px]">
                <ResourceTree />
                <div className="flex w-[10px] shrink-0 flex-col items-center justify-center gap-[3px] pb-[58px]">
                    <i className="size-[2px] bg-[#999]" />
                    <i className="size-[2px] bg-[#999]" />
                    <i className="size-[2px] bg-[#999]" />
                </div>
                <Workspace />
            </div>
        </div>
    )
}
